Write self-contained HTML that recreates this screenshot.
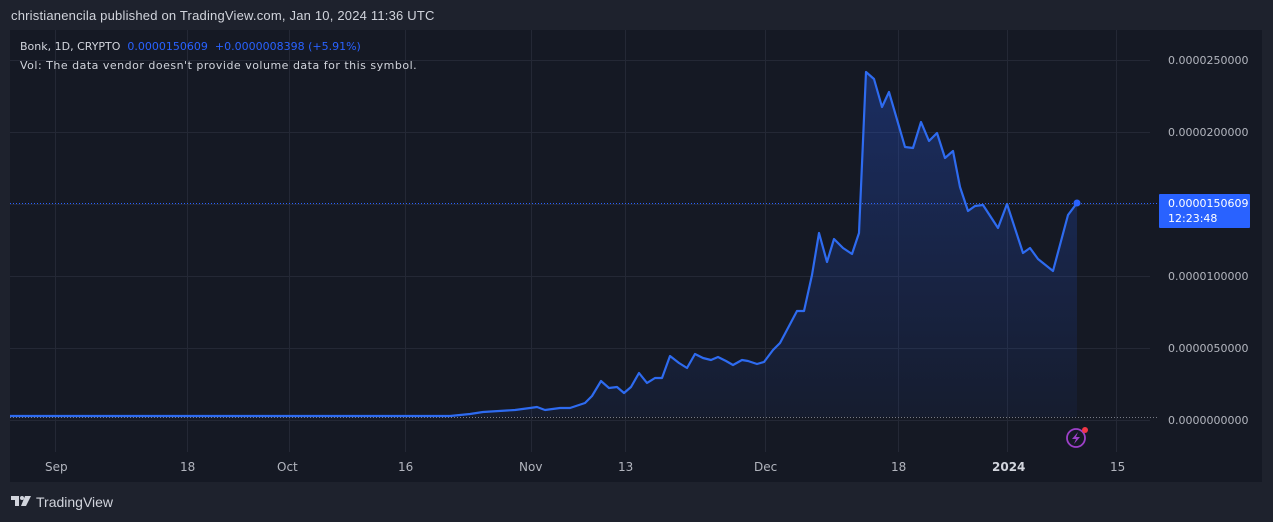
<!DOCTYPE html>
<html><head><meta charset="utf-8"><style>
html,body{margin:0;padding:0}
body{width:1273px;height:522px;background:#1e222d;position:relative;overflow:hidden;font-family:"Liberation Sans","DejaVu Sans",sans-serif;}
.t{position:absolute;white-space:nowrap}
</style></head><body>
<div class="t" style="left:11px;top:8px;font-size:13px;color:#d1d4dc;letter-spacing:0.2px;">christianencila published on TradingView.com, Jan 10, 2024 11:36 UTC</div>
<svg style="position:absolute;left:0;top:0" width="1273" height="522">
<defs><linearGradient id="g" x1="0" y1="0" x2="0" y2="1"><stop offset="0" stop-color="#2962ff" stop-opacity="0.28"/><stop offset="1" stop-color="#2962ff" stop-opacity="0.05"/></linearGradient></defs>
<rect x="10" y="30" width="1252" height="452" fill="#151924"/>
<g stroke="#242835" stroke-width="1">
<line x1="10" y1="60.5" x2="1150" y2="60.5"/><line x1="10" y1="132.5" x2="1150" y2="132.5"/><line x1="10" y1="204.5" x2="1150" y2="204.5"/><line x1="10" y1="276.5" x2="1150" y2="276.5"/><line x1="10" y1="348.5" x2="1150" y2="348.5"/><line x1="10" y1="420.5" x2="1150" y2="420.5"/>
<line x1="55.5" y1="30" x2="55.5" y2="452"/><line x1="187.5" y1="30" x2="187.5" y2="452"/><line x1="289.5" y1="30" x2="289.5" y2="452"/><line x1="405.5" y1="30" x2="405.5" y2="452"/><line x1="531.5" y1="30" x2="531.5" y2="452"/><line x1="625.5" y1="30" x2="625.5" y2="452"/><line x1="765.5" y1="30" x2="765.5" y2="452"/><line x1="898.5" y1="30" x2="898.5" y2="452"/><line x1="1007.5" y1="30" x2="1007.5" y2="452"/><line x1="1116.5" y1="30" x2="1116.5" y2="452"/>
</g>
<line x1="10" y1="417.5" x2="1158" y2="417.5" stroke="#787b86" stroke-width="1" stroke-dasharray="1 2"/>
<line x1="10" y1="203.5" x2="1158" y2="203.5" stroke="#2962ff" stroke-width="1" stroke-dasharray="1 2"/>
<path d="M10,416 L450,416 L470,414 L483,412 L515,410 L530,408 L537,407 L545,410 L560,408 L570,408 L585,403 L592,396 L601,381 L609,388 L617,387 L624,393 L631,387 L639,373 L647,383 L655,378 L662,378 L670,356 L679,363 L687,368 L695,354 L703,358 L711,360 L718,357 L726,361 L733,365 L742,360 L748,361 L757,364 L764,362 L773,350 L780,343 L788,328 L797,311 L804,311 L812,275 L819,233 L827,262 L834,239 L843,248 L852,254 L859,233 L866,72 L874,79 L882,107 L889,92 L905,147 L913,148 L921,122 L929,141 L937,133 L945,158 L953,151 L960,187 L968,211 L975,206 L983,205 L998,228 L1007,204 L1023,253 L1030,248 L1038,259 L1053,271 L1068,215 L1077,203 L1077,417 L10,417 Z" fill="url(#g)"/>
<path d="M10,416 L450,416 L470,414 L483,412 L515,410 L530,408 L537,407 L545,410 L560,408 L570,408 L585,403 L592,396 L601,381 L609,388 L617,387 L624,393 L631,387 L639,373 L647,383 L655,378 L662,378 L670,356 L679,363 L687,368 L695,354 L703,358 L711,360 L718,357 L726,361 L733,365 L742,360 L748,361 L757,364 L764,362 L773,350 L780,343 L788,328 L797,311 L804,311 L812,275 L819,233 L827,262 L834,239 L843,248 L852,254 L859,233 L866,72 L874,79 L882,107 L889,92 L905,147 L913,148 L921,122 L929,141 L937,133 L945,158 L953,151 L960,187 L968,211 L975,206 L983,205 L998,228 L1007,204 L1023,253 L1030,248 L1038,259 L1053,271 L1068,215 L1077,203" fill="none" stroke="#2e6bf0" stroke-width="2.2" stroke-linejoin="round"/>
<circle cx="1077" cy="203" r="3.5" fill="#2962ff"/>
<rect x="1159" y="194" width="91" height="34" fill="#2962ff" rx="1"/>
<circle cx="1076" cy="438" r="9" fill="none" stroke="#9c40c8" stroke-width="1.8"/>
<path d="M1078,432 L1072,439 L1076,439 L1074,444 L1080,437 L1076,437 Z" fill="#9c40c8"/>
<circle cx="1085" cy="430" r="3" fill="#f23645"/>
<g fill="#d1d4dc"><rect x="11" y="496" width="8" height="4"/><rect x="15" y="496" width="4" height="10"/><circle cx="22" cy="498" r="2"/><path d="M25,496 L31,496 L26,506 L21,506 Z"/></g>
</svg>
<div class="t" style="left:20px;top:40px;font-size:11px;color:#d1d4dc;font-family:'DejaVu Sans',sans-serif;">Bonk, 1D, CRYPTO&nbsp; <span style="color:#2962ff">0.0000150609&nbsp; +0.0000008398 (+5.91%)</span></div>
<div class="t" style="left:20px;top:59px;font-size:11px;color:#d1d4dc;font-family:'DejaVu Sans',sans-serif;letter-spacing:0.5px;">Vol: The data vendor doesn't provide volume data for this symbol.</div>
<div style="position:absolute;left:1168px;top:0;font-size:11px;color:#b2b5be;font-family:'DejaVu Sans',sans-serif;">
<div class="t" style="top:54px">0.0000250000</div><div class="t" style="top:126px">0.0000200000</div><div class="t" style="top:270px">0.0000100000</div><div class="t" style="top:342px">0.0000050000</div><div class="t" style="top:414px">0.0000000000</div>
<div class="t" style="top:197px;color:#fff">0.0000150609</div><div class="t" style="top:212px;color:#fff">12:23:48</div>
</div>
<div style="font-size:12px;color:#b2b5be;font-family:'DejaVu Sans',sans-serif;">
<div class="t" style="left:45px;top:460px">Sep</div><div class="t" style="left:180px;top:460px">18</div><div class="t" style="left:277px;top:460px">Oct</div><div class="t" style="left:398px;top:460px">16</div><div class="t" style="left:519px;top:460px">Nov</div><div class="t" style="left:618px;top:460px">13</div><div class="t" style="left:754px;top:460px">Dec</div><div class="t" style="left:891px;top:460px">18</div><div class="t" style="left:992px;top:460px;font-weight:bold;color:#d1d4dc">2024</div><div class="t" style="left:1110px;top:460px">15</div>
</div>
<div class="t" style="left:36px;top:494px;font-size:14px;color:#d1d4dc;">TradingView</div>
</body></html>
